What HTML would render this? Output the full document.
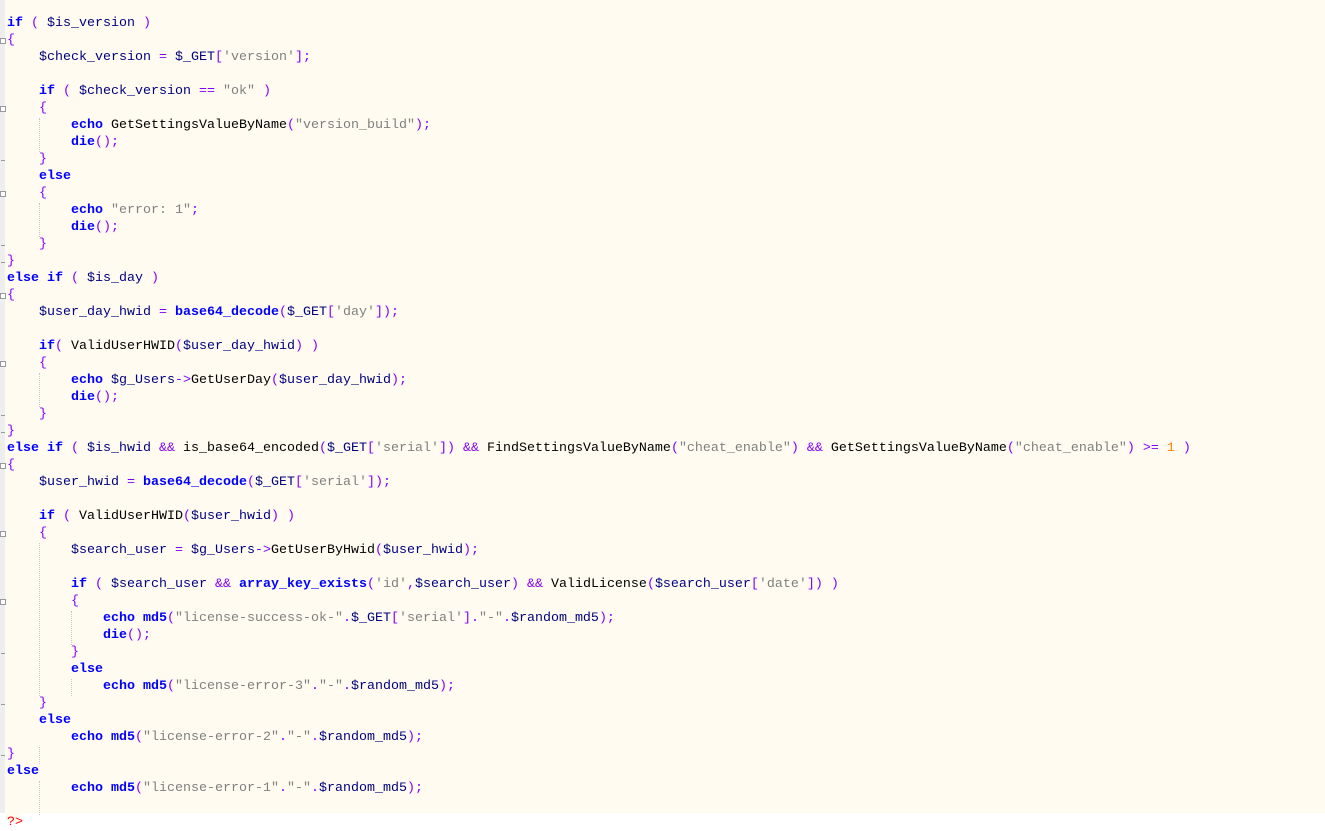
<!DOCTYPE html>
<html><head><meta charset="utf-8"><style>
html,body{margin:0;padding:0;width:1325px;height:821px;overflow:hidden;background:#fff}
#ed{position:absolute;left:0;top:0;width:1325px;height:813px;background:#fffbf0}
#gut{position:absolute;left:0;top:0;width:5px;height:813px;background:#eeeeee}
pre{position:absolute;left:7px;top:15px;margin:0;font-family:"Liberation Mono",monospace;font-size:13.33px;line-height:17px;color:#000}
.k,.b{color:#0000ff;font-weight:bold}
.v{color:#000080}
.o{color:#8000ff}
.s{color:#808080}
.n{color:#ff8000}
.q{color:#ff0000}
.g{position:absolute;width:0;border-left:1px dotted #c8c8c8}
.fb{position:absolute;left:0;width:6px;height:6px;border:1px solid #999;background:#fff;box-sizing:border-box}
.fl{position:absolute;left:1px;width:4px;height:1px;background:#999}
#end{position:absolute;left:5px;top:813px;width:15px;height:8px;background:#fffbf0}
</style></head><body>
<div id="ed"></div><div id="gut"></div><div id="end"></div>
<div class="fb" style="top:38px"></div>
<div class="fb" style="top:106px"></div>
<div class="fb" style="top:191px"></div>
<div class="fb" style="top:293px"></div>
<div class="fb" style="top:361px"></div>
<div class="fb" style="top:463px"></div>
<div class="fb" style="top:531px"></div>
<div class="fb" style="top:599px"></div>
<div class="fl" style="top:160px"></div><div class="fl" style="top:245px"></div><div class="fl" style="top:262px"></div>
<div class="fl" style="top:415px"></div><div class="fl" style="top:432px"></div>
<div class="fl" style="top:653px"></div><div class="fl" style="top:704px"></div><div class="fl" style="top:755px"></div>
<div class="g" style="left:39px;top:118px;height:34px"></div>
<div class="g" style="left:39px;top:203px;height:34px"></div>
<div class="g" style="left:39px;top:373px;height:34px"></div>
<div class="g" style="left:39px;top:543px;height:153px"></div>
<div class="g" style="left:71px;top:611px;height:34px"></div>
<div class="g" style="left:71px;top:679px;height:17px"></div>
<div class="g" style="left:39px;top:747px;height:17px"></div>
<div class="g" style="left:39px;top:781px;height:34px"></div>
<pre><span class="k">if</span> <span class="o">(</span> <span class="v">$is_version</span> <span class="o">)</span>
<span class="o">{</span>
    <span class="v">$check_version</span> <span class="o">=</span> <span class="v">$_GET</span><span class="o">[</span><span class="s">'version'</span><span class="o">];</span>

    <span class="k">if</span> <span class="o">(</span> <span class="v">$check_version</span> <span class="o">==</span> <span class="s">"ok"</span> <span class="o">)</span>
    <span class="o">{</span>
        <span class="b">echo</span> GetSettingsValueByName<span class="o">(</span><span class="s">"version_build"</span><span class="o">);</span>
        <span class="b">die</span><span class="o">();</span>
    <span class="o">}</span>
    <span class="k">else</span>
    <span class="o">{</span>
        <span class="b">echo</span> <span class="s">"error: 1"</span><span class="o">;</span>
        <span class="b">die</span><span class="o">();</span>
    <span class="o">}</span>
<span class="o">}</span>
<span class="k">else if</span> <span class="o">(</span> <span class="v">$is_day</span> <span class="o">)</span>
<span class="o">{</span>
    <span class="v">$user_day_hwid</span> <span class="o">=</span> <span class="b">base64_decode</span><span class="o">(</span><span class="v">$_GET</span><span class="o">[</span><span class="s">'day'</span><span class="o">]);</span>

    <span class="k">if</span><span class="o">(</span> ValidUserHWID<span class="o">(</span><span class="v">$user_day_hwid</span><span class="o">)</span> <span class="o">)</span>
    <span class="o">{</span>
        <span class="b">echo</span> <span class="v">$g_Users</span><span class="o">-&gt;</span>GetUserDay<span class="o">(</span><span class="v">$user_day_hwid</span><span class="o">);</span>
        <span class="b">die</span><span class="o">();</span>
    <span class="o">}</span>
<span class="o">}</span>
<span class="k">else if</span> <span class="o">(</span> <span class="v">$is_hwid</span> <span class="o">&amp;&amp;</span> is_base64_encoded<span class="o">(</span><span class="v">$_GET</span><span class="o">[</span><span class="s">'serial'</span><span class="o">])</span> <span class="o">&amp;&amp;</span> FindSettingsValueByName<span class="o">(</span><span class="s">"cheat_enable"</span><span class="o">)</span> <span class="o">&amp;&amp;</span> GetSettingsValueByName<span class="o">(</span><span class="s">"cheat_enable"</span><span class="o">)</span> <span class="o">&gt;=</span> <span class="n">1</span> <span class="o">)</span>
<span class="o">{</span>
    <span class="v">$user_hwid</span> <span class="o">=</span> <span class="b">base64_decode</span><span class="o">(</span><span class="v">$_GET</span><span class="o">[</span><span class="s">'serial'</span><span class="o">]);</span>

    <span class="k">if</span> <span class="o">(</span> ValidUserHWID<span class="o">(</span><span class="v">$user_hwid</span><span class="o">)</span> <span class="o">)</span>
    <span class="o">{</span>
        <span class="v">$search_user</span> <span class="o">=</span> <span class="v">$g_Users</span><span class="o">-&gt;</span>GetUserByHwid<span class="o">(</span><span class="v">$user_hwid</span><span class="o">);</span>

        <span class="k">if</span> <span class="o">(</span> <span class="v">$search_user</span> <span class="o">&amp;&amp;</span> <span class="b">array_key_exists</span><span class="o">(</span><span class="s">'id'</span><span class="o">,</span><span class="v">$search_user</span><span class="o">)</span> <span class="o">&amp;&amp;</span> ValidLicense<span class="o">(</span><span class="v">$search_user</span><span class="o">[</span><span class="s">'date'</span><span class="o">])</span> <span class="o">)</span>
        <span class="o">{</span>
            <span class="b">echo</span> <span class="b">md5</span><span class="o">(</span><span class="s">"license-success-ok-"</span><span class="o">.</span><span class="v">$_GET</span><span class="o">[</span><span class="s">'serial'</span><span class="o">].</span><span class="s">"-"</span><span class="o">.</span><span class="v">$random_md5</span><span class="o">);</span>
            <span class="b">die</span><span class="o">();</span>
        <span class="o">}</span>
        <span class="k">else</span>
            <span class="b">echo</span> <span class="b">md5</span><span class="o">(</span><span class="s">"license-error-3"</span><span class="o">.</span><span class="s">"-"</span><span class="o">.</span><span class="v">$random_md5</span><span class="o">);</span>
    <span class="o">}</span>
    <span class="k">else</span>
        <span class="b">echo</span> <span class="b">md5</span><span class="o">(</span><span class="s">"license-error-2"</span><span class="o">.</span><span class="s">"-"</span><span class="o">.</span><span class="v">$random_md5</span><span class="o">);</span>
<span class="o">}</span>
<span class="k">else</span>
        <span class="b">echo</span> <span class="b">md5</span><span class="o">(</span><span class="s">"license-error-1"</span><span class="o">.</span><span class="s">"-"</span><span class="o">.</span><span class="v">$random_md5</span><span class="o">);</span>

<span class="q">?&gt;</span></pre>
</body></html>
